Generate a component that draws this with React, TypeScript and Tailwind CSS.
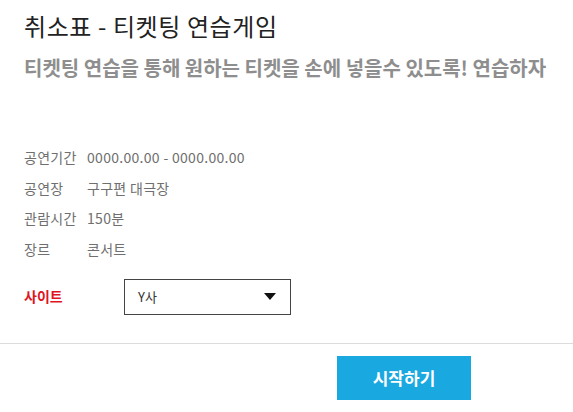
import React from "react";

const font = { fontFamily: '"Noto Sans CJK KR", "Noto Sans", sans-serif' };

export default function App() {
  const rows: [string, string][] = [
    ["공연기간", "0000.00.00 - 0000.00.00"],
    ["공연장", "구구편 대극장"],
    ["관람시간", "150분"],
    ["장르", "콘서트"],
  ];
  return (
    <div className="w-[573px] h-[412px] bg-white overflow-hidden" style={font}>
      <div className="px-6 pt-[10px]">
        <h1 className="whitespace-nowrap text-[24px] leading-[32px] text-[#222] tracking-[0.6px]">취소표 - 티켓팅 연습게임</h1>
        <p className="mt-[13px] whitespace-nowrap text-[20px] leading-[26px] font-bold text-[#8e8e8e]">
          티켓팅 연습을 통해 원하는 티켓을 손에 넣을수 있도록! 연습하자
        </p>
        <div className="mt-[61px] flex flex-col">
          {rows.map(([k, v]) => (
            <div key={k} className="flex h-[30.7px] items-center text-[14px] text-[#6f6f6f] tracking-[0.3px]">
              <span className="w-[63px]">{k}</span>
              <span>{v}</span>
            </div>
          ))}
        </div>
        <div className="mt-[14px] flex items-center">
          <span className="w-[100px] text-[14px] font-bold text-[#e0141e]">사이트</span>
          <div className="w-[167px] h-[36px] border border-[#444] flex items-center justify-between pl-[13px] pr-[14px]">
            <span className="text-[13px] text-[#333]">Y사</span>
            <svg width="12" height="7" viewBox="0 0 12 7">
              <path d="M0 0 L12 0 L6 7 Z" fill="#111" />
            </svg>
          </div>
        </div>
      </div>
      <div className="mt-[28px] border-t border-[#dcdcdc]" />
      <div className="pl-[337px] pt-[12px]">
        <button className="w-[134px] h-[44px] bg-[#1aa8e1] text-white text-[17px] font-bold">시작하기</button>
      </div>
    </div>
  );
}
